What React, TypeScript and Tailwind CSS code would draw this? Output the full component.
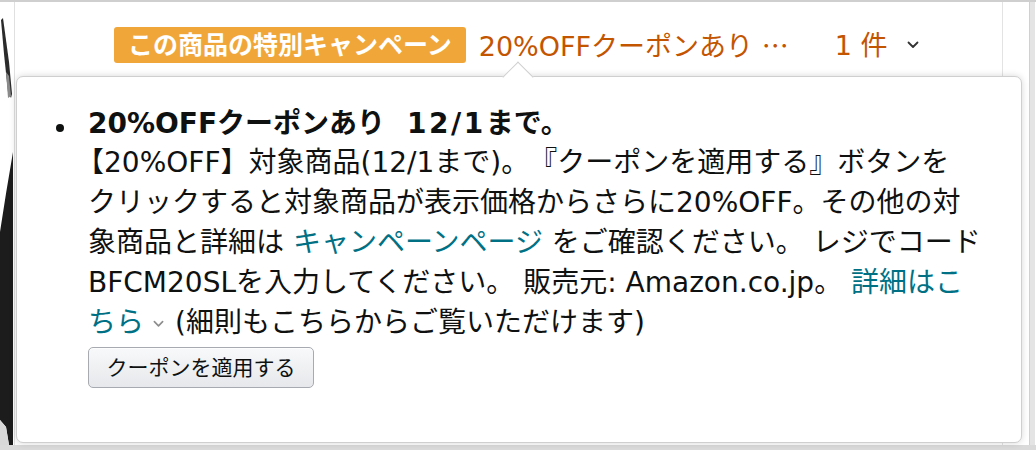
import React from 'react';

const jp = "font-['Liberation_Sans','Noto_Sans_CJK_JP',sans-serif]";
const body = "font-['DejaVu_Sans','Noto_Sans_CJK_JP',sans-serif]";

function Chevron({ className }: { className?: string }) {
  return (
    <svg viewBox="0 0 12 8" className={className} fill="none" stroke="currentColor" strokeWidth="1.8" strokeLinecap="round" strokeLinejoin="round">
      <path d="M1.5 1.5 L6 6 L10.5 1.5" />
    </svg>
  );
}

// dark sliver of the product photo peeking in at the left edge
function ProductEdge() {
  return (
    <svg width="14" height="443" viewBox="0 0 14 443" className="block">
      <path d="M1 18 L3 16 L9 60 L12 92 L11 96 L8 90 L4 52 Z" fill="#2b2b2b" />
      <path d="M6 70 L9 74 L11 94 L8 96 Z" fill="#8a8a8a" />
      <path d="M13 150 L13 443 L9 443 L6 425 L0 418 L0 230 Q6 190 13 150 Z" fill="#1c1c1c" />
      <path d="M0 418 L6 425 L9 443 L0 443 Z" fill="#d8d8d8" />
    </svg>
  );
}

export default function App() {
  return (
    <div className={`w-[1036px] h-[450px] bg-[#e2e2e2] relative overflow-hidden flex flex-col text-[#0f1111] ${jp}`}>
      <div className="h-[2px] bg-[#cfcfcf]" />
      <div className="flex-1 flex bg-white">
        <div className="w-[14px] shrink-0">
          <ProductEdge />
        </div>
        <div className="w-px bg-[#e0e0e0]" />
        {/* page area behind the popover */}
        <div className="w-[988px] border-r border-[#e3e3e3]">
          <div className="flex items-center pl-[99px] pt-[25px]">
            <span className="h-[36px] px-[14px] flex items-center rounded-[3px] bg-[#f1a63a] text-white text-[25px] font-bold leading-none">
              この商品の特別キャンペーン
            </span>
            <span className={`ml-[13px] text-[27px] leading-none text-[#c45500] whitespace-nowrap ${body}`}>
              20%OFFクーポンあり <span className="font-['Noto_Sans_CJK_JP']">…</span>
            </span>
            <span className={`ml-[46px] text-[27px] leading-none text-[#c45500] whitespace-nowrap ${body}`}>1 件</span>
            <Chevron className="ml-[20px] w-[12px] h-[8px] text-[#333]" />
          </div>
        </div>
        <div className="w-[26px]" />
        <div className="w-[6px] bg-[#e4e4e4] border-l border-[#d0d0d0]" />
      </div>
      <div className="h-[5px] bg-[#dadada]" />

      {/* coupon popover */}
      <div className="absolute left-[16px] top-[76px] w-[1006px] h-[367px] bg-white border border-[#cfcfcf] rounded-[7px] shadow-[0_0_7px_rgba(0,0,0,0.16)] pt-[28px] pl-[39px]">
        <div className="absolute left-[490px] -top-[11px] w-[22px] h-[22px] bg-white border-l border-t border-[#cfcfcf] rotate-45" />
        <div className="relative flex">
          <div className="w-[32px] shrink-0">
            <div className="mt-[19px] w-[8px] h-[8px] rounded-full bg-[#0f1111]" />
          </div>
          <div className={`whitespace-nowrap [text-spacing-trim:space-all] ${body}`}>
            <div className="text-[28px] leading-[38px] font-semibold">
              20%OFFクーポンあり<span className="ml-[22px] tracking-[2.5px]">12/1</span>まで。
            </div>
            <div className="text-[28px] leading-[40px]">
              <span className="-ml-[12px]">【</span>20%OFF】対象商品(12/1まで)。『クーポンを適用する』ボタンを
              <br />
              クリックすると対象商品が表示価格からさらに20%OFF。その他の対
              <br />
              象商品と詳細は <span className="text-[#007185]">キャンペーンページ</span> をご確認ください。 レジでコード
              <br />
              BFCM20SLを入力してください。 販売元: Amazon.co.jp。 <span className="text-[#007185]">詳細はこ</span>
              <br />
              <span className="text-[#007185]">ちら</span>
              <Chevron className="inline-block ml-[9px] mr-[11px] w-[11px] h-[8px] align-middle text-[#8d8d8d]" />
              (細則もこちらからご覧いただけます)
            </div>
            <button className={`mt-[4px] h-[41px] w-[226px] flex items-center justify-center rounded-[5px] border border-[#a7aab0] bg-linear-to-b from-[#f8f9fa] to-[#e6e8eb] shadow-[inset_0_1px_0_rgba(255,255,255,0.7)] text-[21px] leading-none text-[#0f1111] ${jp}`}>
              クーポンを適用する
            </button>
          </div>
        </div>
      </div>
    </div>
  );
}
